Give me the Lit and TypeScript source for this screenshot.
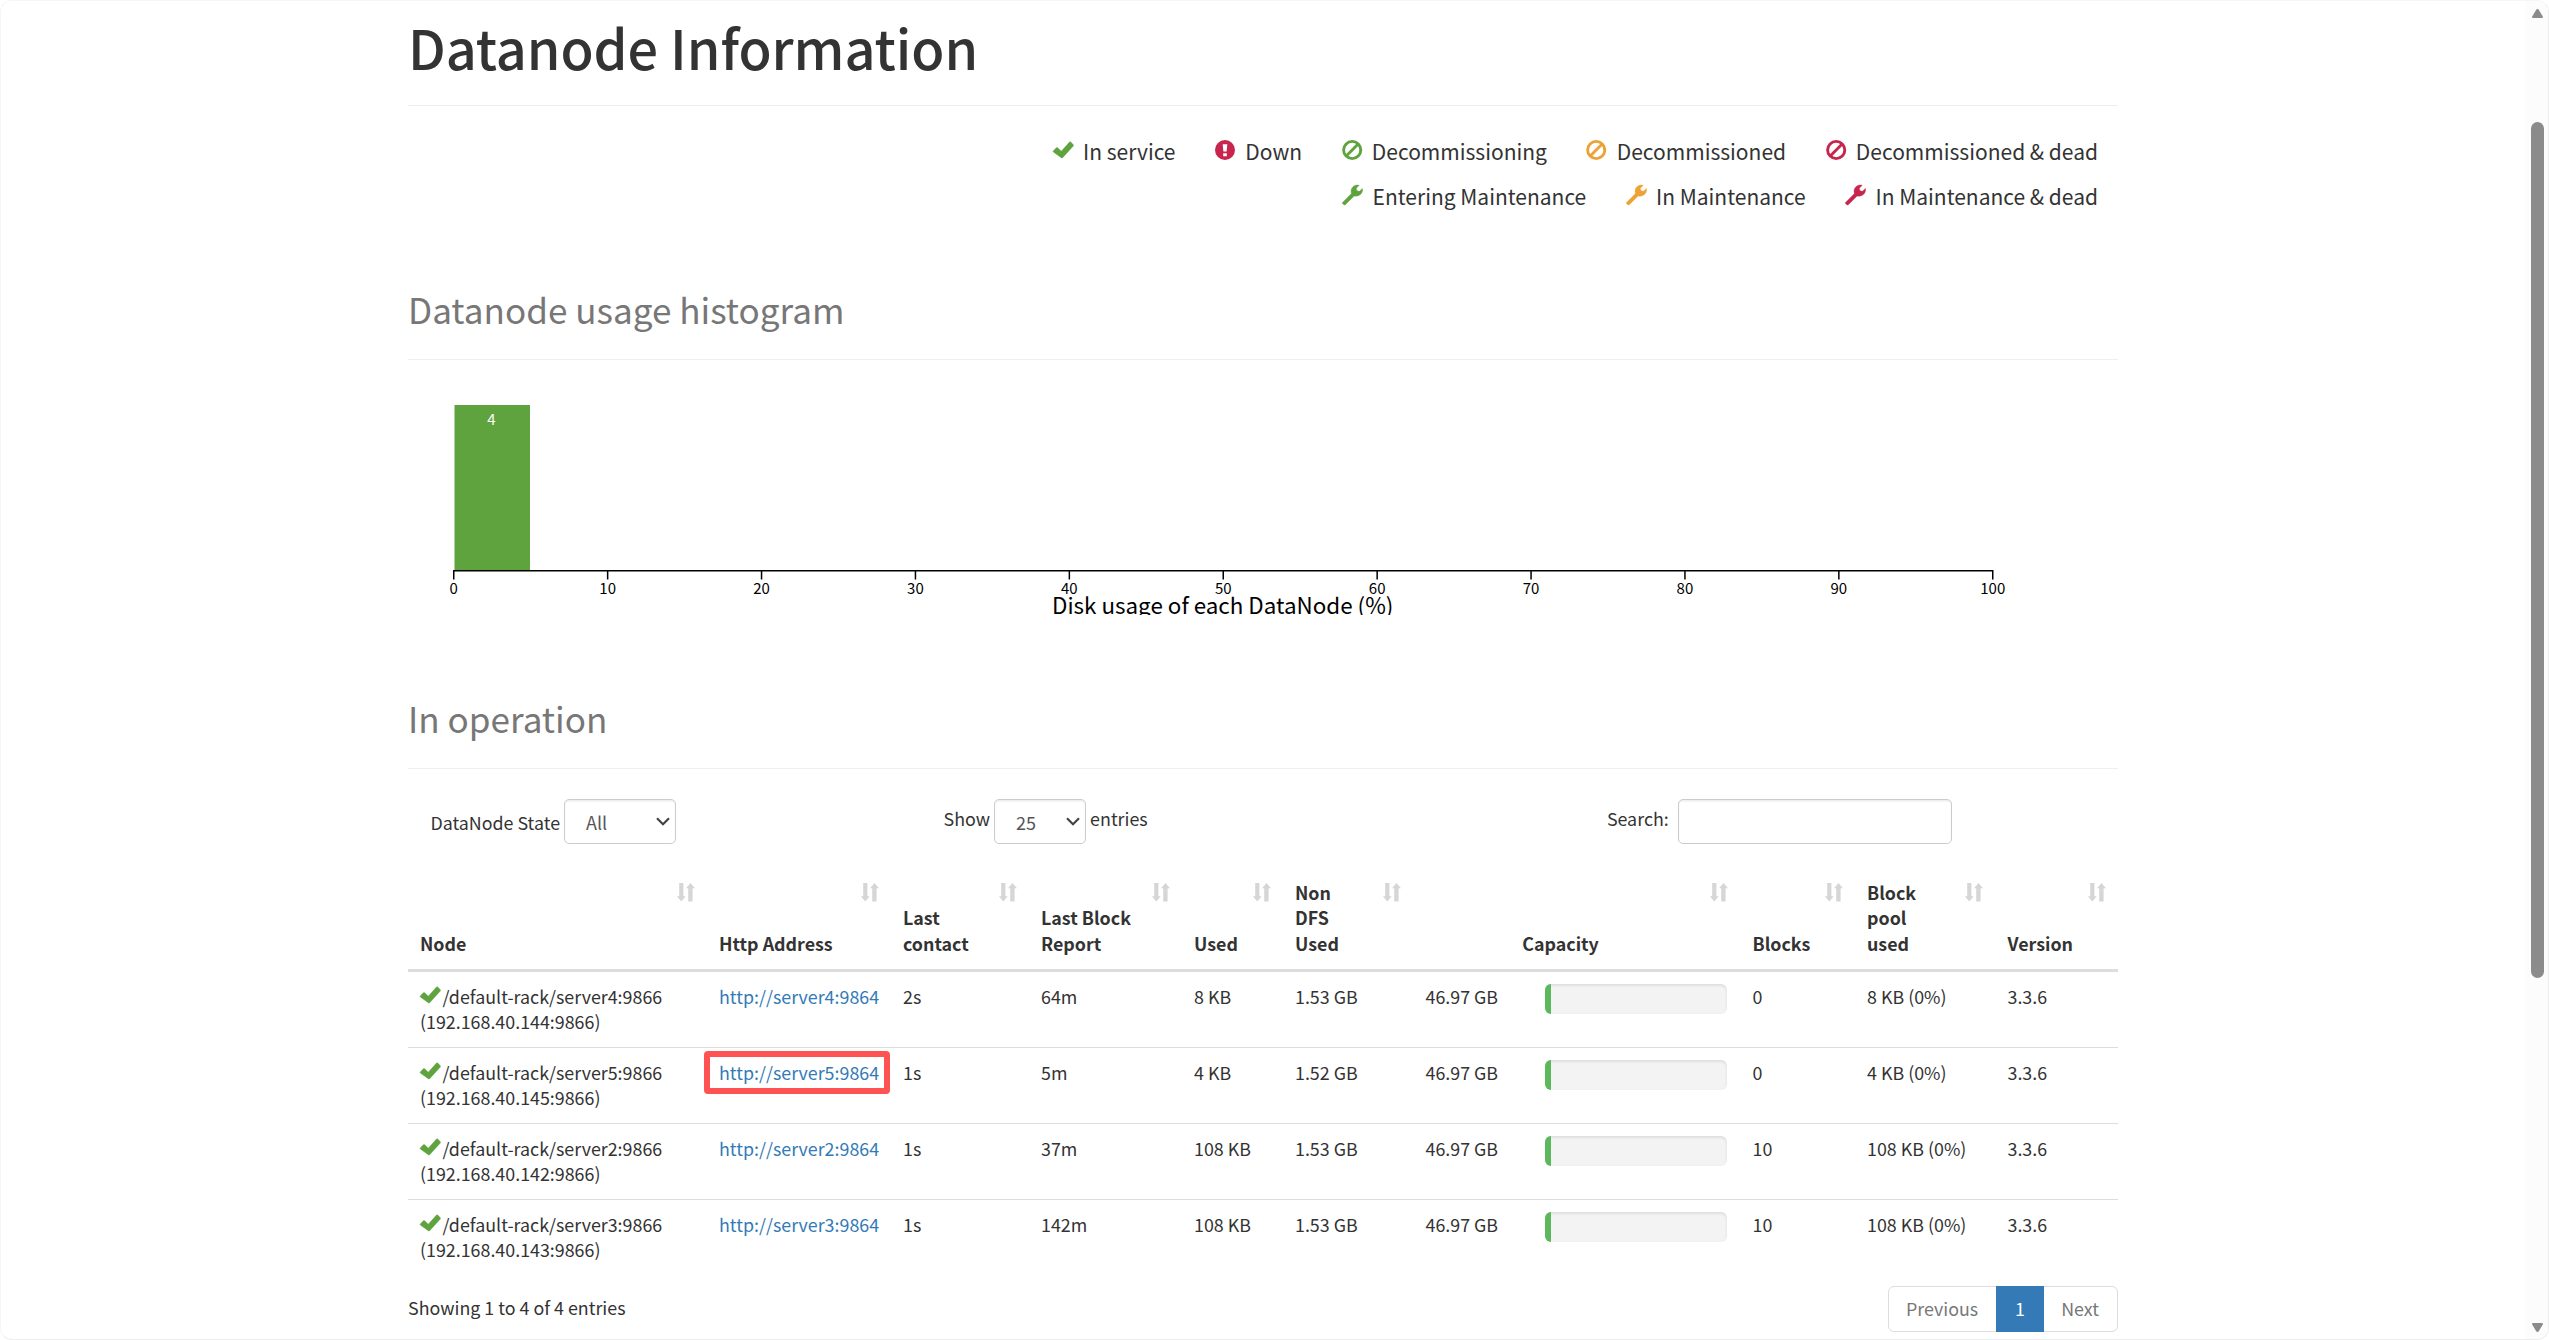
import { LitElement, html, svg, css } from "lit";
import { customElement } from "lit/decorators.js";

type IconName = "ok" | "alert" | "ban" | "wrench";

interface LegendItem {
  icon: IconName;
  tone: string;
  label: string;
}

interface DataNode {
  name: string;
  ip: string;
  http: string;
  contact: string;
  report: string;
  used: string;
  nonDfs: string;
  capacity: string;
  usage: number;
  blocks: string;
  pool: string;
  version: string;
  marked?: boolean;
}

const LEGEND: LegendItem[][] = [
  [
    { icon: "ok", tone: "green", label: "In service" },
    { icon: "alert", tone: "red", label: "Down" },
    { icon: "ban", tone: "green", label: "Decommissioning" },
    { icon: "ban", tone: "orange", label: "Decommissioned" },
    { icon: "ban", tone: "red", label: "Decommissioned & dead" },
  ],
  [
    { icon: "wrench", tone: "green", label: "Entering Maintenance" },
    { icon: "wrench", tone: "orange", label: "In Maintenance" },
    { icon: "wrench", tone: "red", label: "In Maintenance & dead" },
  ],
];

const COLUMNS = [
  { label: "Node", cls: "c-node" },
  { label: "Http Address", cls: "c-http" },
  { label: "Last contact", cls: "c-contact" },
  { label: "Last Block Report", cls: "c-report" },
  { label: "Used", cls: "c-used" },
  { label: "Non DFS Used", cls: "c-non" },
  { label: "Capacity", cls: "c-cap" },
  { label: "Blocks", cls: "c-blocks" },
  { label: "Block pool used", cls: "c-pool" },
  { label: "Version", cls: "c-version" },
];

const node = (
  n: number, contact: string, report: string, used: string,
  nonDfs: string, blocks: string, marked = false,
): DataNode => ({
  name: `/default-rack/server${n}:9866`,
  ip: `(192.168.40.14${n}:9866)`,
  http: `http://server${n}:9864`,
  contact, report, used, nonDfs,
  capacity: "46.97 GB",
  usage: 3.2,
  blocks,
  pool: `${used} (0%)`,
  version: "3.3.6",
  marked,
});

const NODES: DataNode[] = [
  node(4, "2s", "64m", "8 KB", "1.53 GB", "0"),
  node(5, "1s", "5m", "4 KB", "1.52 GB", "0", true),
  node(2, "1s", "37m", "108 KB", "1.53 GB", "10"),
  node(3, "1s", "142m", "108 KB", "1.53 GB", "10"),
];

const SHAPES: Record<IconName, unknown> = {
  ok: svg`<path d="M.3 9.4 3.4 6.2Q4 5.7 4.6 6.2L8.3 9.8 16.5.6Q17.1 0 17.7.6L20.3 3.2Q20.8 3.8 20.3 4.4L9.6 16.3Q9 16.9 8.4 16.3L.3 10.4Q-.1 9.9.3 9.4Z" transform="translate(0 1.5)" stroke="currentColor" stroke-width=".5"/>`,
  alert: svg`<path fill-rule="evenodd" d="M10 0a10 10 0 1 1 0 20a10 10 0 1 1 0-20ZM7.7 4.2 8.4 11.6H11.6L12.3 4.2ZM8.2 13.2V16.2H11.8V13.2Z"/>`,
  ban: svg`<circle cx="10.2" cy="10" r="8.6" fill="none" stroke="currentColor" stroke-width="2.9"/><path d="M4.5 15.7 15.9 4.3" stroke="currentColor" stroke-width="2.9"/>`,
  wrench: svg`<path d="M.5 17.4 9.3 8.7C8.6 5.500 9.300 2.900 11.500 1.300C13.300 0 15.500-.2 17.200.3L14.300 3.200 14.900 5.700 17.400 6.300 20.400 3.400C20.900 5.500 20.300 7.600 18.700 9.200C17 10.900 14.500 11.500 12.100 11L3.300 19.700Q2.600 20.300 1.900 19.700L.5 18.600Q-.1 18 .5 17.400Z" stroke="currentColor" stroke-width=".4"/>`,
};

const icon = (name: IconName, tone: string) =>
  html`<svg class="icon ${tone}" viewBox="0 0 21 21" fill="currentColor">${SHAPES[name]}</svg>`;

const sortIcon = html`<svg class="sort" viewBox="0 0 18 18.500">
  <path d="M2.200 0H6.400V13.200H8.700L4.300 18.500 -.1 13.200H2.200ZM11.200 18.500H15.600V5.300H18L13.500 0 9 5.300H11.200Z" />
</svg>`;

const chevron = html`<svg class="chevron" viewBox="0 0 14 9">
  <path d="M1 1.200 7 7.200 13 1.200" fill="none" stroke="currentColor" stroke-width="2.200" />
</svg>`;

@customElement("usage-histogram")
class UsageHistogram extends LitElement {
  static styles = css`
    :host { display: block; }
    .chart { display: block; overflow: hidden; }
    .bar { fill: #5fa33e; }
    .axis { fill: none; stroke: #000; stroke-width: 1.5; }
    .tick { font-size: 15px; text-anchor: middle; fill: #000; }
    .count { font-size: 15px; text-anchor: middle; fill: #fff; }
    .title { font-size: 22.4px; text-anchor: middle; fill: #000; }
  `;

  render() {
    const x0 = 45.75;
    const step = 153.9;
    const ticks = Array.from({ length: 11 }, (_, i) => i);
    return html`<svg class="chart" width="1710" height="225" viewBox="0 0 1710 225">
      <rect class="bar" x="46.500" y="15" width="75.500" height="165" />
      <text class="count" x="83.400" y="34.500">4</text>
      <path class="axis" d="M${x0} 189.500V180.750H${x0 + step * 10}V189.500" />
      ${ticks.slice(1, 10).map((i) => svg`<path class="axis" d="M${x0 + step * i} 180.750V189.500" />`)}
      ${ticks.map((i) => svg`<text class="tick" x=${x0 + step * i} y="204">${i * 10}</text>`)}
      <text class="title" x="814.700" y="223.800">Disk usage of each DataNode (%)</text>
    </svg>`;
  }
}

@customElement("app-root")
class AppRoot extends LitElement {
  static styles = css`
    :host {
      display: block;
      height: 1340px;
      overflow: hidden;
      background: #fff;
      color: #333;
      font-family: "Noto Sans CJK SC", "Noto Sans", sans-serif;
      font-size: 21px;
    }
    * { box-sizing: border-box; }
    .window {
      display: flex;
      height: 1340px;
      border: 1px solid #ededed;
      border-top-color: #f6f6f6;
      border-left-color: #f6f6f6;
      border-radius: 12px;
      overflow: hidden;
    }
    .page { flex: 1; padding: 0 407px; margin-top: -1px; }
    .content { width: 1710px; }
    .heading {
      display: flex;
      align-items: flex-end;
      margin: 0;
      border-bottom: 1px solid #eee;
      font-weight: 500;
    }
    .heading.main { height: 106px; padding-bottom: 29px; font-size: 54px; line-height: 59px; letter-spacing: -0.06px; }
    .heading.sub { font-size: 35.1px; line-height: 40px; font-weight: 400; color: #777; padding-bottom: 30px; }
    .heading.hist { height: 142px; }
    .heading.oper { height: 154px; }
    .legend { height: 112px; padding: 22px 20px 0 0; }
    .legend-row { display: flex; justify-content: flex-end; gap: 39.5px; height: 45px; line-height: 47px; }
    .item { display: flex; gap: 9.3px; white-space: nowrap; }
    .icon { width: 21px; height: 21px; flex: none; margin-top: 12px; overflow: visible; }
    .green { color: #5fa33e; }
    .orange { color: #eea236; }
    .red { color: #c7254e; }
    .chart-box { height: 255px; padding-top: 30px; }
    .controls { display: flex; height: 106px; padding: 30px 0 0 22.4px; font-size: 17.85px; }
    .group { display: flex; line-height: 45px; }
    .group.state { width: 513.200px; }
    .group.length { width: 663.300px; }
    .label { margin-top: -3px; height: 45px; }
    .label.low { margin-top: 1px; }
    .field {
      display: flex;
      justify-content: space-between;
      height: 45px;
      margin: 0 4px;
      padding: 0 5px 0 21px;
      border: 1px solid #ccc;
      border-radius: 5px;
      box-shadow: inset 0 1.500px 1.500px rgba(0, 0, 0, 0.075);
      color: #555;
      background: #fff;
      font-size: 18px;
      line-height: 45px;
    }
    .field.all { width: 112px; }
    .field.count { width: 92px; }
    .field.search { width: 274px; margin-left: 9.200px; }
    .chevron { width: 14px; height: 9px; margin-top: 17px; color: #444; }
    table {
      width: 1710px;
      table-layout: fixed;
      border-collapse: separate;
      border-spacing: 0;
      font-size: 17.85px;
      line-height: 25.5px;
    }
    th {
      position: relative;
      height: 97px;
      padding: 0 45px 12.7px 12px;
      border-bottom: 3px solid #ddd;
      text-align: left;
      vertical-align: bottom;
      font-weight: 700;
    }
    th.c-cap { text-align: center; }
    .sort { position: absolute; top: 8px; right: 12.200px; width: 18px; height: 18.500px; fill: #d6d6d6; overflow: visible; }
    .c-node { width: 299px; }
    .c-http { width: 184px; }
    .c-contact { width: 138px; }
    .c-report { width: 153px; }
    .c-used { width: 101px; }
    .c-non { width: 130.5px; }
    .c-cap { width: 327px; }
    .c-blocks { width: 114.5px; }
    .c-pool { width: 140.5px; }
    .c-version { width: 122.5px; }
    td {
      height: 76px;
      padding: 12.3px 12px 0;
      border-top: 1px solid #ddd;
      vertical-align: top;
      white-space: nowrap;
      line-height: 25px;
    }
    tr.first td { height: 75px; border-top: 0; }
    .node-icon { display: inline-block; height: 22px; margin: 1px 1.500px 0 0; vertical-align: top; }
    .node-icon .icon { display: block; margin: 0; }
    .link { position: relative; color: #337ab7; text-decoration: none; }
    .mark {
      position: absolute;
      left: -15.300px;
      top: -8px;
      width: 186.500px;
      height: 43px;
      border: 6px solid #ff5252;
      border-radius: 4px;
    }
    .capacity { display: flex; justify-content: space-between; }
    .progress {
      width: 182px;
      height: 30px;
      margin: -0.3px 1.500px 0 0;
      background: #f3f3f3;
      border-radius: 6px;
      box-shadow: inset 0 1.500px 3px rgba(0, 0, 0, 0.1);
      overflow: hidden;
    }
    .fill { height: 100%; background: #5cb85c; }
    .footer { display: flex; justify-content: space-between; padding-top: 11px; font-size: 17.85px; }
    .info { line-height: 43px; }
    .pager { display: flex; height: 46px; color: #777; border: 1px solid #ddd; border-radius: 6px; line-height: 43px; font-size: 17.85px; }
    .pager-item { padding: 0 18px 0 17.5px; }
    .pager-item.active { margin: -1px 0; width: 47.5px; padding: 0; line-height: 45px; text-align: center; color: #fff; background: #337ab7; }
    .scrollbar {
      display: flex;
      flex-direction: column;
      align-items: center;
      width: 22px;
      padding: 8px 0 7px;
      background: #fcfcfc;
    }
    .arrow { width: 11px; height: 9px; fill: #8b8b8b; }
    .thumb { width: 13px; height: 856px; margin: 104px 0 auto; border-radius: 7px; background: #8b8b8b; }
  `;

  private renderRow(d: DataNode, i: number) {
    return html`<tr class=${i === 0 ? "first" : ""}>
      <td><span class="node-icon">${icon("ok", "green")}</span>${d.name}<br />${d.ip}</td>
      <td><a class="link">${d.http}${d.marked ? html`<span class="mark"></span>` : ""}</a></td>
      <td>${d.contact}</td>
      <td>${d.report}</td>
      <td>${d.used}</td>
      <td>${d.nonDfs}</td>
      <td>
        <div class="capacity">
          <span>${d.capacity}</span>
          <div class="progress"><div class="fill" style="width:${d.usage}%"></div></div>
        </div>
      </td>
      <td>${d.blocks}</td>
      <td>${d.pool}</td>
      <td>${d.version}</td>
    </tr>`;
  }

  render() {
    return html`<div class="window">
      <main class="page">
        <div class="content">
          <h1 class="heading main">Datanode Information</h1>
          <div class="legend">
            ${LEGEND.map((row) => html`<div class="legend-row">
              ${row.map((l) => html`<div class="item">${icon(l.icon, l.tone)}<span>${l.label}</span></div>`)}
            </div>`)}
          </div>
          <h2 class="heading sub hist">Datanode usage histogram</h2>
          <div class="chart-box"><usage-histogram></usage-histogram></div>
          <h2 class="heading sub oper">In operation</h2>
          <div class="controls">
            <div class="group state">
              <span class="label low">DataNode State</span>
              <div class="field all"><span>All</span>${chevron}</div>
            </div>
            <div class="group length">
              <span class="label">Show</span>
              <div class="field count"><span>25</span>${chevron}</div>
              <span class="label">entries</span>
            </div>
            <div class="group">
              <span class="label">Search:</span>
              <div class="field search"></div>
            </div>
          </div>
          <table>
            <thead>
              <tr>${COLUMNS.map((c) => html`<th class=${c.cls}>${c.label}${sortIcon}</th>`)}</tr>
            </thead>
            <tbody>${NODES.map((d, i) => this.renderRow(d, i))}</tbody>
          </table>
          <div class="footer">
            <span class="info">Showing 1 to 4 of 4 entries</span>
            <div class="pager">
              <span class="pager-item">Previous</span>
              <span class="pager-item active">1</span>
              <span class="pager-item">Next</span>
            </div>
          </div>
        </div>
      </main>
      <div class="scrollbar">
        <svg class="arrow" viewBox="0 0 11 9"><path d="M5.500 0Q6.300 0 6.800.8L10.800 7.500Q11.300 9 10 9H1Q-.3 9 .2 7.500L4.200.8Q4.700 0 5.500 0Z" /></svg>
        <div class="thumb"></div>
        <svg class="arrow" viewBox="0 0 11 9"><path d="M5.500 9Q6.300 9 6.800 8.200L10.800 1.500Q11.300 0 10 0H1Q-.3 0 .2 1.500L4.200 8.200Q4.700 9 5.500 9Z" /></svg>
      </div>
    </div>`;
  }
}
